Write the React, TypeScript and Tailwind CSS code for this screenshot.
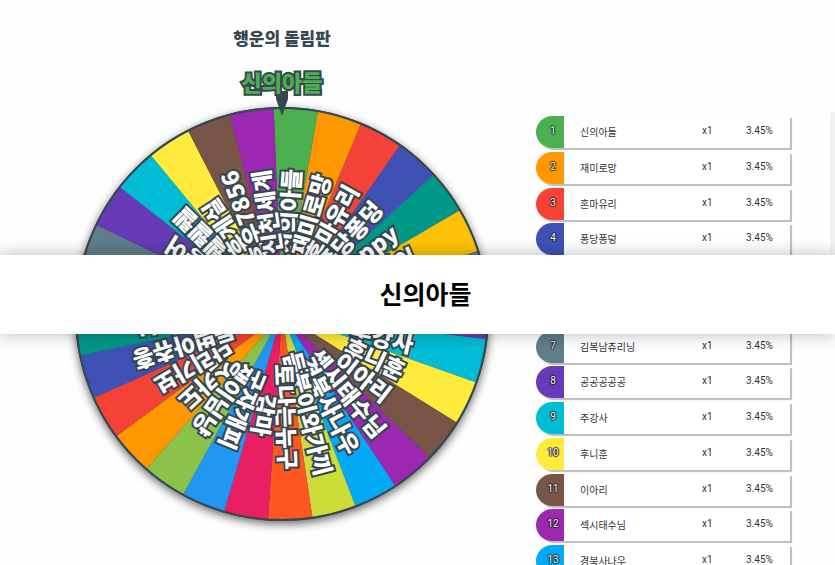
const segments = [
  { name: '신의아들', color: '#4caf50' },
  { name: '재미로망', color: '#ff9800' },
  { name: '혼마유리', color: '#f44336' },
  { name: '퐁당퐁덩', color: '#3f51b5' },
  { name: 'Happy', color: '#009688' },
  { name: '김나박이', color: '#ffc107' },
  { name: '김복남츄리닝', color: '#607d8b' },
  { name: '공공공공공', color: '#673ab7' },
  { name: '주강사', color: '#00bcd4' },
  { name: '후니훈', color: '#ffeb3b' },
  { name: '이아리', color: '#795548' },
  { name: '섹시태수님', color: '#9c27b0' },
  { name: '경북사나우', color: '#03a9f4' },
  { name: '듬붓이와가끼', color: '#cddc39' },
  { name: '토나는뉴구', color: '#ff5722' },
  { name: '감마', color: '#e91e63' },
  { name: '굿자개피', color: '#2196f3' },
  { name: '쟁이님냥', color: '#8bc34a' },
  { name: '스카도', color: '#ff9800' },
  { name: '단리가보', color: '#f44336' },
  { name: '듬범아츄흥', color: '#3f51b5' },
  { name: '나무늘보', color: '#009688' },
  { name: '바다', color: '#ffc107' },
  { name: '구름', color: '#607d8b' },
  { name: '고등어', color: '#673ab7' },
  { name: '뤨뤨뤨뤨', color: '#00bcd4' },
  { name: '휴게실', color: '#ffeb3b' },
  { name: '후우7856', color: '#795548' },
  { name: '신천세계', color: '#9c27b0' },
];

const badgeColors = [
  'bg-[#4caf50]',
  'bg-[#ff9800]',
  'bg-[#f44336]',
  'bg-[#3f51b5]',
  'bg-[#009688]',
  'bg-[#ffc107]',
  'bg-[#607d8b]',
  'bg-[#673ab7]',
  'bg-[#00bcd4]',
  'bg-[#ffeb3b]',
  'bg-[#795548]',
  'bg-[#9c27b0]',
  'bg-[#03a9f4]',
];

const STEP = 360 / segments.length;
const START = -2.3;
const RADIUS = 206;

function point(angle: number) {
  const a = (angle * Math.PI) / 180;
  return `${(RADIUS * Math.sin(a)).toFixed(2)} ${(-RADIUS * Math.cos(a)).toFixed(2)}`;
}

function Wheel() {
  return (
    <svg
      viewBox="-220 -220 440 440"
      className="size-[440px] overflow-visible"
      role="img"
      aria-label="행운의 돌림판"
    >
      <g className="drop-shadow-[0_3px_5px_rgba(0,0,0,0.6)]">
        <circle r={RADIUS} fill="#37474f" stroke="#37474f" strokeWidth="2" />
      </g>
      {segments.map((s, i) => (
        <path
          key={i}
          d={`M0 0 L${point(START + i * STEP)} A${RADIUS} ${RADIUS} 0 0 1 ${point(START + (i + 1) * STEP)} Z`}
          fill={s.color}
        />
      ))}
      <circle r={RADIUS} fill="none" stroke="#37474f" strokeWidth="2" />
      {segments.map((s, i) => (
        <text
          key={i}
          transform={`rotate(${START + (i + 0.5) * STEP - 90})`}
          x="103"
          y="9"
          textAnchor="middle"
          fill="#fff"
          stroke="#37474f"
          strokeWidth="4"
          paintOrder="stroke"
          className="text-[23px] font-black"
        >
          {s.name}
        </text>
      ))}
    </svg>
  );
}

function EntryTable() {
  return (
    <table className="block w-full font-['Roboto','Noto_Sans_CJK_KR',sans-serif] text-[10px] leading-4 text-[#333]">
      <tbody className="flex h-[461px] flex-col justify-between">
        {badgeColors.map((badge, i) => (
          <tr
            key={i}
            className="flex h-8 shrink-0 items-center rounded-l-2xl bg-white shadow-[2px_2px_1px_#bdbdbd]"
          >
            <td
              className={`flex h-8 w-7 items-center justify-center rounded-l-2xl pb-0.5 pl-1.5 text-[10px] text-[#eee] [text-shadow:-1px_0_1px_#222,1px_0_1px_#222,0_-1px_1px_#222,0_1px_1px_#222] ${badge}`}
            >
              {i + 1}
            </td>
            <td className="flex-1 pl-4 pt-0.5">{segments[i].name}</td>
            <td className="w-11 pb-0.5">x1</td>
            <td className="w-11 pb-0.5">3.45%</td>
          </tr>
        ))}
      </tbody>
    </table>
  );
}

export default function App() {
  return (
    <div className="relative flex h-screen overflow-hidden bg-[#fefefe] font-['Noto_Sans_CJK_KR',sans-serif]">
      <main className="flex flex-1 flex-col items-center pl-7 pt-6">
        <h1 className="text-[17px] font-black leading-7 text-[#37474f]">행운의 돌림판</h1>
        <div className="relative mt-[42px]">
          <Wheel />
          <svg
            viewBox="0 0 120 80"
            className="absolute -top-12 left-1/2 h-20 w-[120px] -translate-x-1/2"
            aria-hidden="true"
          >
            <path d="M54 45 H66 V53 L60 70 L54 53 Z" fill="#37474f" />
            <text
              x="60"
              y="45"
              textAnchor="middle"
              fill="#4caf50"
              stroke="#37474f"
              strokeWidth="4"
              paintOrder="stroke"
              className="text-[22px] font-black"
            >
              신의아들
            </text>
          </svg>
        </div>
      </main>
      <aside className="mr-[45px] w-[254px] pt-[116px]">
        <EntryTable />
      </aside>
      <div className="absolute right-0 top-28 h-40 w-[5px] rounded-tl bg-[#f1f1f1]" />
      <div
        role="dialog"
        aria-label="당첨 결과"
        className="absolute inset-x-0 top-[255px] flex h-[79px] items-center justify-center bg-white pb-1 pl-4 shadow-[0_0_16px_rgba(0,0,0,0.28)]"
      >
        <p className="text-[25px] font-bold leading-9 text-black">신의아들</p>
      </div>
    </div>
  );
}
